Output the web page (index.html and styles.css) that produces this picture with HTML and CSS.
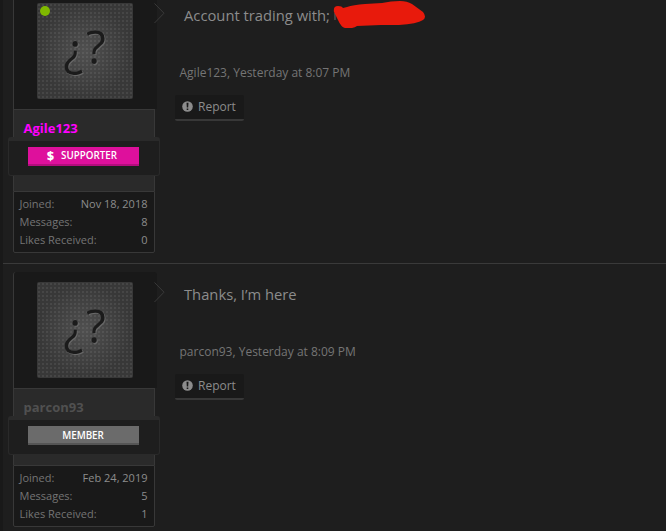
FILE: index.html
```html
<!DOCTYPE html>
<html lang="en">
<head>
<meta charset="utf-8">
<title>Thread</title>
<link rel="stylesheet" href="styles.css">
</head>
<body>
<main class="thread">
  <article class="post">
    <aside class="user">
      <div class="avatar-holder">
        <svg class="pointer" width="11" height="21" viewBox="0 0 11 21"><path d="M.5 .5 10 10.2.5 20" fill="none" stroke="#3a3a3a"/></svg>
        <div class="avatar">
          <svg width="96" height="96" viewBox="0 0 96 96"><g class="marks"><text x="26.5" y="63">¿</text><text x="49" y="61">?</text></g></svg>
          <span class="online"></span>
        </div>
      </div>
      <div class="identity">
        <h3 class="name supporter-name">Agile123</h3>
        <div class="ribbon"><div class="badge supporter"><b class="dollar">$</b><span>SUPPORTER</span></div></div>
      </div>
      <dl class="stats">
        <div><dt>Joined:</dt><dd>Nov 18, 2018</dd></div>
        <div><dt>Messages:</dt><dd>8</dd></div>
        <div><dt>Likes Received:</dt><dd>0</dd></div>
      </dl>
    </aside>
    <section class="content">
      <p class="message">Account trading with; <svg class="scribble" width="93" height="28" viewBox="0 0 93 28"><path d="M2 13v7" stroke="#666"/><path d="M1 12Q0 6 5 6Q9 6 10 8L14 7Q20 5 32 4L49 3Q58 1 67 1Q74 1 79 4L90 12Q94 17 90 20Q84 24 66 25L48 25L24 26Q20 29 12 28Q8 27 5 20Z" fill="#e81a0c"/></svg></p>
      <p class="meta">Agile123, Yesterday at 8:07 PM</p>
      <button class="report"><svg width="11" height="11" viewBox="0 0 11 11"><circle cx="5.5" cy="5.5" r="5.3" fill="#8c8c8c"/><path d="M4.5 1.8h2L6.2 6.4H4.8ZM4.7 7.4h1.6V9H4.7Z" fill="#191919"/></svg>Report</button>
    </section>
  </article>
  <article class="post">
    <aside class="user">
      <div class="avatar-holder">
        <svg class="pointer" width="11" height="21" viewBox="0 0 11 21"><path d="M.5 .5 10 10.2.5 20" fill="none" stroke="#3a3a3a"/></svg>
        <div class="avatar">
          <svg width="96" height="96" viewBox="0 0 96 96"><g class="marks"><text x="26.5" y="63">¿</text><text x="49" y="61">?</text></g></svg>
        </div>
      </div>
      <div class="identity short">
        <h3 class="name member-name">parcon93</h3>
        <div class="ribbon"><div class="badge member"><span>MEMBER</span></div></div>
      </div>
      <dl class="stats">
        <div><dt>Joined:</dt><dd>Feb 24, 2019</dd></div>
        <div><dt>Messages:</dt><dd>5</dd></div>
        <div><dt>Likes Received:</dt><dd>1</dd></div>
      </dl>
    </aside>
    <section class="content">
      <p class="message">Thanks, I’m here</p>
      <p class="meta">parcon93, Yesterday at 8:09 PM</p>
      <button class="report"><svg width="11" height="11" viewBox="0 0 11 11"><circle cx="5.5" cy="5.5" r="5.3" fill="#8c8c8c"/><path d="M4.5 1.8h2L6.2 6.4H4.8ZM4.7 7.4h1.6V9H4.7Z" fill="#191919"/></svg>Report</button>
    </section>
  </article>
</main>
</body>
</html>
```
FILE: styles.css
```css
* { box-sizing: border-box; }
body {
  margin: 0;
  height: 531px;
  overflow: hidden;
  background: #191919;
  color: #8c8c8c;
  font-family: "Open Sans", sans-serif;
}
h3, p, dl, dd { margin: 0; }
.thread {
  margin: -15px 0 0 3px;
  background: #1e1e1e;
}
.post {
  display: flex;
  height: 279px;
  padding: 8px 0 0 10px;
  border-bottom: 1px solid #3a3a3a;
}
.user { width: 142px; flex: none; }
.avatar-holder {
  position: relative;
  width: 144px;
  height: 116px;
  padding: 10px 0 0 23px;
  border-left: 1px solid #383838;
  border-radius: 3px 3px 0 0;
  background: #191919;
}
.pointer { position: absolute; left: 139.5px; top: 10px; }
.avatar {
  position: relative;
  width: 96px;
  height: 96px;
  border-radius: 2px;
  overflow: hidden;
  background:
    radial-gradient(circle, #ffffff12 0.8px, transparent 1.3px) 0 0 / 4px 4px,
    radial-gradient(circle, #505050 0, #383838 68%);
}
.avatar svg { display: block; }
.marks {
  font-size: 46px;
  fill: #1b1b1b;
  filter: drop-shadow(1px 1px 0 #686868);
}
.online {
  position: absolute;
  left: 3px;
  top: 3px;
  width: 10px;
  height: 10px;
  border-radius: 50%;
  background: #7fb900;
}
.identity {
  height: 82px;
  border: 1px solid #383838;
  border-bottom: 0;
  background: #2a2a2a;
}
.short { height: 77px; }
.name {
  height: 28px;
  padding: 9px 0 0 9.5px;
  font-size: 13px;
  line-height: 18px;
  font-weight: 700;
}
.supporter-name { color: #f0f; }
.member-name { color: #505050; }
.ribbon {
  position: relative;
  width: 152px;
  height: 39px;
  margin: -1px 0 0 -6px;
  padding: 6px 20px 0 19px;
  border: 1px solid #2a2a2a;
  border-top-width: 4px;
  border-radius: 3px;
  background: #1e1e1e;
}
.badge {
  display: flex;
  justify-content: center;
  align-items: center;
  gap: 7px;
  width: 111px;
  height: 19px;
  padding-right: 3px;
  color: #fff;
  font-size: 9.8px;
  line-height: 17px;
  font-weight: 600;
}
.supporter { background: #de109c; border-bottom: 2px solid #b30d7d; }
.member { background: #6b6b6b; border-bottom: 2px solid #555; padding: 1px 1px 0 0; }
.dollar { font-size: 12px; font-weight: 800; }
.stats {
  height: 62px;
  padding: 3px 6.5px 0 5.5px;
  border: 1px solid #383838;
  border-radius: 0 0 2px 2px;
  background: #191919;
  font-size: 11px;
  line-height: 18px;
}
.stats div { display: flex; justify-content: space-between; }
.stats dt { color: #757575; }
.stats dd { color: #8c8c8c; }
.content { padding-left: 24.5px; }
.message {
  display: flex;
  height: 57px;
  padding: 11px 0 0 4.5px;
  font-size: 14.75px;
  line-height: 22px;
  white-space: nowrap;
}
.scribble { margin: -4px 0 0 3px; }
.meta {
  height: 45px;
  padding-top: 14px;
  color: #757575;
  font-size: 12px;
  line-height: 18px;
}
.report {
  display: flex;
  align-items: center;
  gap: 5px;
  width: 69px;
  height: 26px;
  margin-left: -4.5px;
  padding: 0 0 1px 7px;
  border: 0;
  border-bottom: 2px solid #383838;
  border-radius: 2px;
  background: #191919;
  color: #8c8c8c;
  font: 12px "Open Sans", sans-serif;
}
```
